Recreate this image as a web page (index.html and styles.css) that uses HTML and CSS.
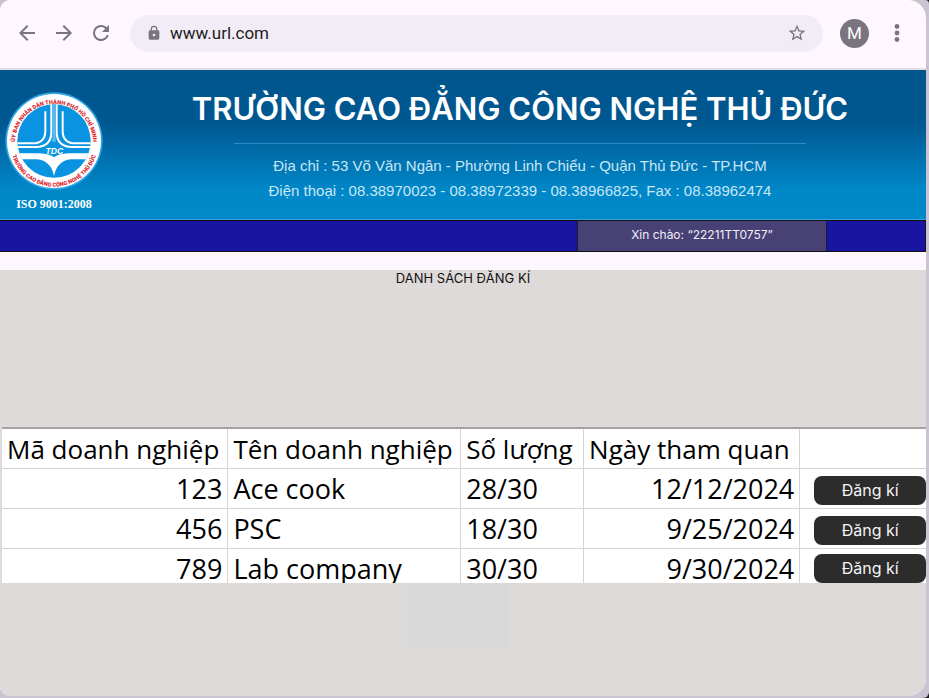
FILE: index.html
```html
<!DOCTYPE html>
<html lang="vi">
<head>
<meta charset="utf-8">
<meta name="viewport" content="width=device-width, initial-scale=1">
<title>Danh sách đăng kí</title>
<link rel="stylesheet" href="styles.css">
</head>
<body>
<div class="frame">
<div class="window">
  <div class="toolbar">
    <button class="icon-btn" type="button" aria-label="Back"><svg viewBox="0 0 24 24"><path d="M20 11H7.83l5.59-5.59L12 4l-8 8 8 8 1.41-1.41L7.83 13H20z"/></svg></button>
    <button class="icon-btn" type="button" aria-label="Forward"><svg viewBox="0 0 24 24"><path d="M12 4l-1.41 1.41L16.17 11H4v2h12.17l-5.58 5.59L12 20l8-8z"/></svg></button>
    <button class="icon-btn" type="button" aria-label="Reload"><svg viewBox="0 0 24 24"><path d="M17.65 6.35A7.96 7.96 0 0 0 12 4a8 8 0 1 0 7.73 10h-2.08A6 6 0 1 1 12 6c1.66 0 3.14.69 4.22 1.78L13 11h7V4z"/></svg></button>
    <div class="address">
      <svg class="lock" viewBox="0 0 24 24" aria-hidden="true"><path d="M18 8h-1V6A5 5 0 0 0 7 6v2H6a2 2 0 0 0-2 2v10c0 1.100.9 2 2 2h12a2 2 0 0 0 2-2V10a2 2 0 0 0-2-2zm-6 9a2 2 0 1 1 0-4 2 2 0 0 1 0 4zM8.900 8V6a3.100 3.100 0 0 1 6.200 0v2z"/></svg>
      <input class="url" type="text" value="www.url.com" aria-label="Address">
      <button class="icon-btn" type="button" aria-label="Bookmark"><svg class="star" viewBox="0 0 24 24"><path d="M22 9.240l-7.190-.62L12 2 9.190 8.630 2 9.240l5.460 4.730L5.820 21 12 17.270 18.180 21l-1.630-7.030zM12 15.400l-3.760 2.270 1-4.280-3.320-2.880 4.380-.38L12 6.100l1.710 4.040 4.380.38-3.320 2.880 1 4.280z"/></svg></button>
    </div>
    <button class="avatar" type="button" aria-label="Profile">M</button>
    <button class="icon-btn" type="button" aria-label="Menu"><svg viewBox="0 0 24 24"><circle cx="12" cy="5.500" r="2.400"/><circle cx="12" cy="12" r="2.400"/><circle cx="12" cy="18.500" r="2.400"/></svg></button>
  </div>

  <header class="banner">
    <div class="brand">
      <svg class="logo" viewBox="13 69 300 300" role="img" aria-label="TDC">
        <defs>
          <path id="arc-top" d="M46 225A117 117 0 1 1 280 225"/>
          <path id="arc-bottom" d="M32 225A131 131 0 0 0 294 225"/>
          <clipPath id="disc"><circle cx="163" cy="219" r="110"/></clipPath>
        </defs>
        <circle class="logo-glow" cx="163" cy="219" r="146"/>
        <circle class="logo-ring" cx="163" cy="219" r="141"/>
        <circle class="logo-disc" cx="163" cy="219" r="110"/>
        <g clip-path="url(#disc)">
          <g class="logo-lines">
            <path d="M137 130V188Q137 225 100 226H50M189 130V188Q189 225 226 226H280"/>
            <path d="M155 105V197Q152 236 110 237H50M171 105V197Q174 236 216 237H280"/>
          </g>
          <path class="logo-core" d="M158 105H168V222H158Z"/>
          <path class="logo-book" d="M50 256H118Q151 258 163 268Q175 258 208 256H280V274H214Q172 278 163 325Q154 278 112 274H50Z"/>
        </g>
        <text class="logo-name" x="164" y="258" text-anchor="middle">TDC</text>
        <text class="logo-text" text-anchor="middle"><textPath href="#arc-top" startOffset="50%">ỦY BAN NHÂN DÂN THÀNH PHỐ HỒ CHÍ MINH</textPath></text>
        <text class="logo-text" text-anchor="middle"><textPath href="#arc-bottom" startOffset="50%">TRƯỜNG CAO ĐẲNG CÔNG NGHỆ THỦ ĐỨC</textPath></text>
      </svg>
      <span class="iso">ISO 9001:2008</span>
    </div>
    <div class="school">
      <h1>TRƯỜNG CAO ĐẲNG CÔNG NGHỆ THỦ ĐỨC</h1>
      <div class="contact">
        <p>Địa chỉ : 53 Võ Văn Ngân - Phường Linh Chiểu - Quận Thủ Đức - TP.HCM</p>
        <p>Điện thoại : 08.38970023 - 08.38972339 - 08.38966825, Fax : 08.38962474</p>
      </div>
    </div>
  </header>

  <nav class="nav"><span class="greeting">Xin chào: “22211TT0757”</span></nav>

  <main class="content">
    <h2>DANH SÁCH ĐĂNG KÍ</h2>
    <div class="sheet">
      <table>
        <colgroup><col class="c-id"><col class="c-name"><col class="c-count"><col class="c-date"><col></colgroup>
        <thead>
          <tr><th>Mã doanh nghiệp</th><th>Tên doanh nghiệp</th><th>Số lượng</th><th>Ngày tham quan</th><th></th></tr>
        </thead>
        <tbody>
          <tr><td class="num">123</td><td>Ace cook</td><td>28/30</td><td class="num">12/12/2024</td><td class="action"><button class="register" type="button">Đăng kí</button></td></tr>
          <tr><td class="num">456</td><td>PSC</td><td>18/30</td><td class="num">9/25/2024</td><td class="action"><button class="register" type="button">Đăng kí</button></td></tr>
          <tr><td class="num">789</td><td>Lab company</td><td>30/30</td><td class="num">9/30/2024</td><td class="action"><button class="register" type="button">Đăng kí</button></td></tr>
        </tbody>
      </table>
    </div>
    <div class="placeholder"></div>
  </main>
</div>
</div>
</body>
</html>
```
FILE: styles.css
```css
* { box-sizing: border-box; }
html { background: #1e1e1e; }
body { margin: 0; font-family: Inter, "Liberation Sans", sans-serif; }
h1, h2, p { margin: 0; font-weight: 400; }
button { border: 0; padding: 0; font: inherit; cursor: pointer; }

.frame {
  display: flex;
  min-height: 100vh;
  padding: 0 3px 2px 0;
  background: #cac4d2;
  border-radius: 0 4px 6px 0;
}
.window {
  flex: 1;
  min-width: 0;
  display: flex;
  flex-direction: column;
  overflow: hidden;
  background: #fef7ff;
  border-radius: 10px 18px 18px 10px;
}

.toolbar {
  display: flex;
  align-items: center;
  gap: 13px;
  height: 70px;
  padding: 0 17px 2px 15px;
  border-bottom: 2px solid #e3dde6;
}
.icon-btn {
  display: flex;
  flex: none;
  align-items: center;
  justify-content: center;
  width: 24px;
  height: 24px;
  background: none;
}
.icon-btn svg { width: 24px; height: 24px; fill: #79747e; }
.icon-btn .star { width: 20px; height: 20px; }
.address {
  flex: 1;
  display: flex;
  align-items: center;
  height: 37px;
  margin: 0 4px;
  padding: 0 14px 0 16px;
  background: #f2ecf6;
  border-radius: 19px;
}
.lock { flex: none; width: 16px; height: 16px; fill: #79747e; }
.url {
  flex: 1;
  min-width: 0;
  margin-left: 8px;
  padding: 0;
  border: 0;
  outline: 0;
  background: none;
  color: #1d1b20;
  font: 17px/24px Roboto, sans-serif;
}
.avatar {
  width: 29px;
  height: 29px;
  margin-right: 3px;
  border-radius: 50%;
  background: #79747e;
  color: #fff;
  font: 17px/29px Roboto, sans-serif;
}

.banner {
  display: flex;
  min-height: 150px;
  background: linear-gradient(#00558c 0%, #005891 36%, #0087c8 80%, #0088c9 100%);
  border-bottom: 1px solid #3aa2d6;
}
.brand {
  display: flex;
  flex: none;
  flex-direction: column;
  align-items: center;
  width: 108px;
  padding-top: 21px;
}
.logo { width: 100px; height: 100px; overflow: visible; }
.logo-glow { fill: #2da5e6; }
.logo-ring { fill: #fff; }
.logo-disc { fill: #0a93e0; }
.logo-lines { fill: none; stroke: #fff; stroke-width: 6px; }
.logo-core { fill: #5cb8ee; }
.logo-book { fill: #fff; }
.logo-name { fill: #fff; font: italic bold 26px "Liberation Sans", sans-serif; }
.logo-text { fill: #e0262c; font: 900 17px Roboto, sans-serif; }
.iso { color: #fff; font: bold 12px/26px "Liberation Serif", serif; }
.school {
  flex: 1;
  display: flex;
  flex-direction: column;
  align-items: center;
  padding: 16px 54px 0 60px;
  text-align: center;
  white-space: nowrap;
}
h1 { color: #fff; font-size: 31px; font-weight: 600; line-height: 46px; }
.contact {
  width: 572px;
  margin-top: 11px;
  padding-top: 9px;
  border-top: 1px solid #2a8bc2;
  color: #c9e6f5;
  font: 15px/25px "Liberation Sans", sans-serif;
}

.nav {
  display: flex;
  justify-content: flex-end;
  height: 32px;
  padding-right: 98px;
  background: #1815a3;
  border: 1px solid #111;
  border-left: 0;
}
.greeting {
  width: 250px;
  border: solid #1b1930;
  border-width: 0 1px;
  background: #484176;
  color: #f3eff7;
  font-size: 12px;
  line-height: 28px;
  text-align: center;
}

.content { flex: 1; margin-top: 18px; background: #dedad9; }
h2 { color: #111; font-size: 13px; line-height: 17px; text-align: center; }
.sheet {
  height: 156px;
  margin: 140px 0 0 2px;
  overflow: hidden;
  background: #fff;
  border-top: 2px solid #a3a1a1;
}
table {
  width: 100%;
  table-layout: fixed;
  border-collapse: separate;
  border-spacing: 0;
  color: #000;
  font: 26px/38px "Open Sans", sans-serif;
}
.c-id { width: 24.5%; }
.c-name { width: 25.2%; }
.c-count { width: 13.3%; }
.c-date { width: 23.4%; }
th, td {
  height: 40px;
  padding: 0 5px;
  border: solid #d4d4d4;
  border-width: 0 1px 1px 0;
  font-weight: 400;
  text-align: left;
  white-space: nowrap;
}
td { padding-top: 1px; font-size: 27px; }
th:last-child, td:last-child { border-right: 0; }
td.num { text-align: right; }
td.action { padding: 4px 0 0 14px; }
tr:last-child td.action { padding-top: 0; }
.register {
  display: block;
  width: 100%;
  height: 29px;
  border-radius: 8px;
  background: #2c2c2c;
  color: #f5f5f5;
  font: 16px/29px Inter, sans-serif;
}
.placeholder { width: 103px; height: 65px; margin-left: 44%; background: #d9d9d9; }
```
